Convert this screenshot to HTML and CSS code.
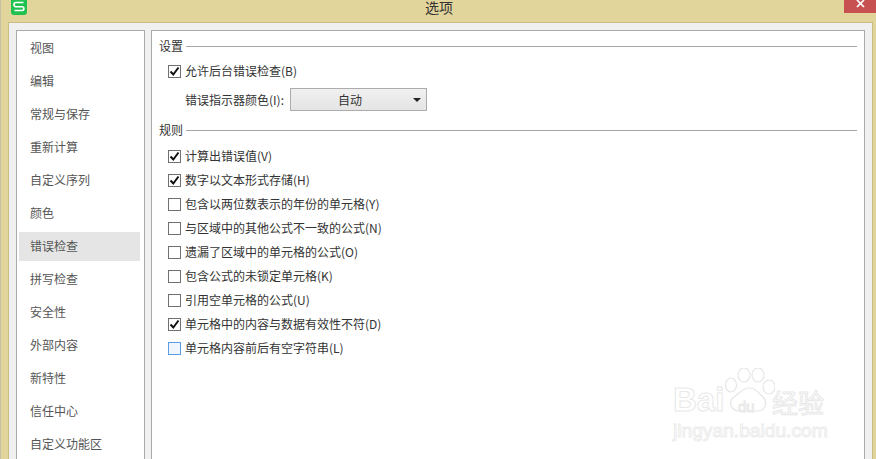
FILE: index.html
```html
<!DOCTYPE html>
<html lang="zh-CN">
<head>
<meta charset="utf-8">
<title>选项</title>
<link rel="stylesheet" href="styles.css">
</head>
<body>
<div class="window">
  <header class="titlebar">
    <svg class="logo" width="16" height="15" viewBox="0 0 16 15"><rect x="0" y="-3" width="16" height="18" rx="3" fill="#1fc14f"/><path d="M12.5 2.5H5a1.8 1.8 0 0 0 0 4.2h6a1.9 1.9 0 0 1 0 3.8H3.5" fill="none" stroke="#fff" stroke-width="1.6"/></svg>
    <span class="title">选项</span>
    <span class="close"><svg width="9" height="8" viewBox="0 0 9 8"><path d="M1 0l7 7M8 0L1 7" stroke="#fff" stroke-width="1.7"/></svg></span>
  </header>
  <div class="body">
    <nav class="side">
      <div class="nav">视图</div>
      <div class="nav">编辑</div>
      <div class="nav">常规与保存</div>
      <div class="nav">重新计算</div>
      <div class="nav">自定义序列</div>
      <div class="nav">颜色</div>
      <div class="nav active">错误检查</div>
      <div class="nav">拼写检查</div>
      <div class="nav">安全性</div>
      <div class="nav">外部内容</div>
      <div class="nav">新特性</div>
      <div class="nav">信任中心</div>
      <div class="nav">自定义功能区</div>
    </nav>
    <main class="panel">
      <div class="group"><span class="group-label">设置</span><i class="rule"></i></div>
      <div class="row first"><span class="box on"><svg width="11" height="11" viewBox="0 0 11 11"><path d="M1.5 5.5l2.8 3L9.5 1.5" fill="none" stroke="#111" stroke-width="2"/></svg></span>允许后台错误检查(B)</div>
      <div class="color-row"><span class="color-label">错误指示器颜色(I):</span><div class="select"><span class="select-text">自动</span><i class="caret"></i></div></div>
      <div class="group second"><span class="group-label">规则</span><i class="rule"></i></div>
      <div class="rules">
        <div class="row"><span class="box on"><svg width="11" height="11" viewBox="0 0 11 11"><path d="M1.5 5.5l2.8 3L9.5 1.5" fill="none" stroke="#111" stroke-width="2"/></svg></span>计算出错误值(V)</div>
        <div class="row"><span class="box on"><svg width="11" height="11" viewBox="0 0 11 11"><path d="M1.5 5.5l2.8 3L9.5 1.5" fill="none" stroke="#111" stroke-width="2"/></svg></span>数字以文本形式存储(H)</div>
        <div class="row"><span class="box"></span>包含以两位数表示的年份的单元格(Y)</div>
        <div class="row"><span class="box"></span>与区域中的其他公式不一致的公式(N)</div>
        <div class="row"><span class="box"></span>遗漏了区域中的单元格的公式(O)</div>
        <div class="row"><span class="box"></span>包含公式的未锁定单元格(K)</div>
        <div class="row"><span class="box"></span>引用空单元格的公式(U)</div>
        <div class="row"><span class="box on"><svg width="11" height="11" viewBox="0 0 11 11"><path d="M1.5 5.5l2.8 3L9.5 1.5" fill="none" stroke="#111" stroke-width="2"/></svg></span>单元格中的内容与数据有效性不符(D)</div>
        <div class="row"><span class="box hover"></span>单元格内容前后有空字符串(L)</div>
      </div>
      <div class="mark">
        <svg class="paw" width="50" height="50" viewBox="0 0 50 50" fill="#fff" stroke="#e6e6e6" stroke-width="1.2"><ellipse cx="6" cy="17" rx="5.5" ry="7"/><ellipse cx="19" cy="7" rx="6" ry="7"/><ellipse cx="33" cy="7" rx="6" ry="7"/><ellipse cx="44" cy="19" rx="6" ry="7"/><path d="M25 20c6 0 8 5 13 9 5 5 3 14-6 14H15C5 43 3 33 9 29c6-4 8-9 16-9z"/></svg>
        <span class="bai">Bai</span><span class="du">du</span><span class="jy">经验</span>
        <div class="mark-url">jingyan.baidu.com</div>
      </div>
    </main>
  </div>
</div>
</body>
</html>
```
FILE: styles.css
```css
* { box-sizing: border-box; }
html, body { margin: 0; height: 100%; overflow: hidden; }
body { font-family: "Noto Sans CJK SC", "Liberation Sans", sans-serif; font-size: 12px; background: #fff; }
.window { width: 876px; height: 459px; display: flex; flex-direction: column; background: #e2d59b; border-left: 1px solid #c4c0a8; }
.titlebar { height: 22px; flex: none; display: flex; position: relative; font-size: 14px; color: #333; }
.logo { margin-left: 10px; }
.title { position: absolute; left: 424px; top: 0; line-height: 14px; }
.close { position: absolute; left: 843px; top: 0; width: 32px; height: 13px; background: #c75050; display: flex; justify-content: center; align-items: flex-start; }
.body { flex: 1; margin: 0 3px 0 7px; display: flex; gap: 6px; padding: 7px 7px 0 7px; background: #f0f0f0; border: 1px solid #c9bc85; border-bottom: 0; min-height: 0; }
.side { width: 129px; flex: none; background: #fff; border: 1px solid #aaa; border-bottom: 0; padding: 1px 4px 0 2px; }
.nav { height: 33px; line-height: 31px; padding-left: 11px; color: #555; white-space: nowrap; }
.nav.active { height: 29px; line-height: 27px; margin: 2px 0; background: #e5e5e5; }
.panel { flex: 1; background: #fff; border: 1px solid #aaa; border-bottom: 0; padding: 6px 7px 0 7px; position: relative; color: #333; }
.group { display: flex; align-items: center; gap: 3px; height: 18px; white-space: nowrap; }
.group-label { padding-bottom: 2px; }
.group.second { margin-top: 10px; }
.rule { flex: 1; height: 1px; background: #a6a6a6; }
.row { height: 24px; display: flex; align-items: center; padding: 0 0 2px 9px; gap: 4px; white-space: nowrap; }
.row.first { margin-top: 4px; }
.rules { margin-top: 5px; }
.box { width: 13px; height: 13px; flex: none; margin-top: 2px; border: 1px solid #707070; background: #fff; display: flex; align-items: center; justify-content: center; }
.box.hover { border-color: #5a9be6; background: #f0f6ff; }
.color-row { height: 23px; margin-top: 5px; display: flex; align-items: center; padding-left: 26px; }
.color-label { width: 105px; white-space: nowrap; }
.select { width: 137px; height: 23px; border: 1px solid #acacac; background: linear-gradient(#f0f0f0, #e5e5e5); display: flex; align-items: center; position: relative; }
.select-text { width: 118px; text-align: center; }
.caret { width: 0; height: 0; border: 4px solid transparent; border-top: 4px solid #222; border-bottom: 0; margin: 0 0 0 4px; }
.mark { position: absolute; left: 521px; top: 331px; width: 160px; height: 90px; color: #fff; white-space: nowrap; }
.paw { position: absolute; left: 52px; top: 6px; }
.bai, .du, .jy { position: absolute; -webkit-text-stroke: 1px #e8e8e8; }
.bai { left: 0; top: 20px; font: 700 33px/36px "Liberation Sans", sans-serif; }
.du { left: 65px; top: 36px; font: 400 15px/18px "Liberation Sans", sans-serif; }
.jy { left: 99px; top: 22px; font: 400 26px/36px "Noto Sans CJK SC", sans-serif; }
.mark-url { position: absolute; left: 0; top: 59px; font: 400 19.2px/20px "Liberation Sans", sans-serif; -webkit-text-stroke: 1px #ececec; }
```
